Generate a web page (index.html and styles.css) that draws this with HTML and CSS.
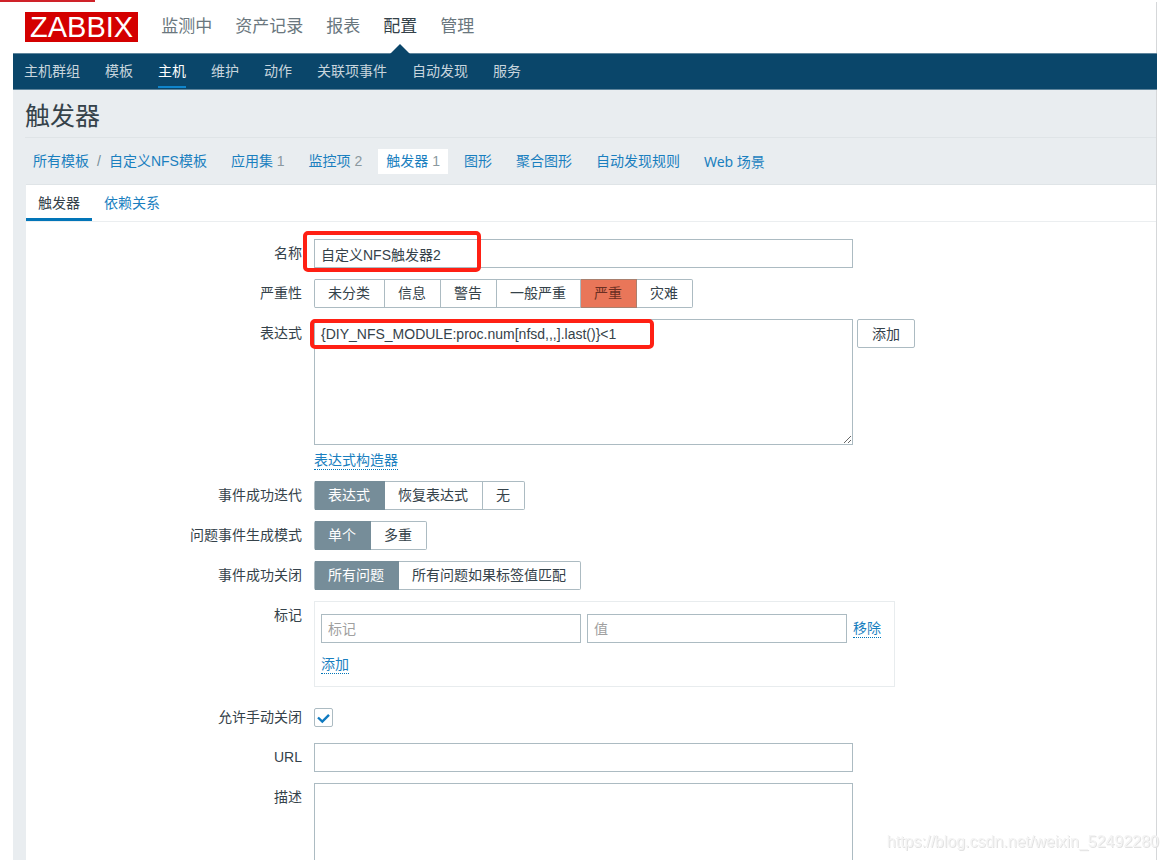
FILE: index.html
```html
<!DOCTYPE html>
<html lang="zh-CN">
<head>
<meta charset="utf-8">
<title>触发器</title>
<link rel="stylesheet" href="styles.css">
</head>
<body>
<div class="progress"></div>
<div class="page">
  <header class="header">
    <a class="logo" href="#">ZABBIX</a>
    <nav class="main-nav">
      <a href="#">监测中</a>
      <a href="#">资产记录</a>
      <a href="#">报表</a>
      <a href="#" class="selected">配置</a>
      <a href="#">管理</a>
    </nav>
  </header>
  <nav class="sub-nav">
    <a href="#">主机群组</a>
    <a href="#">模板</a>
    <a href="#" class="selected">主机</a>
    <a href="#">维护</a>
    <a href="#">动作</a>
    <a href="#">关联项事件</a>
    <a href="#">自动发现</a>
    <a href="#">服务</a>
  </nav>
  <main class="content">
    <h1 class="title">触发器</h1>
    <nav class="object-nav">
      <span class="crumbs"><a href="#">所有模板</a><span class="slash">/</span><a href="#">自定义NFS模板</a></span>
      <span class="item"><a href="#">应用集</a> <span class="count">1</span></span>
      <span class="item"><a href="#">监控项</a> <span class="count">2</span></span>
      <span class="item current"><a href="#">触发器</a> <span class="count">1</span></span>
      <span class="item"><a href="#">图形</a></span>
      <span class="item"><a href="#">聚合图形</a></span>
      <span class="item"><a href="#">自动发现规则</a></span>
      <span class="item humanist"><a href="#">Web 场景</a></span>
    </nav>
    <section class="panel">
      <nav class="tabs">
        <a href="#" class="active">触发器</a>
        <a href="#">依赖关系</a>
      </nav>
      <form class="form">
        <label class="label" for="name">名称</label>
        <div class="field marked marked-name">
          <input class="text wide" id="name" type="text" value="自定义NFS触发器2">
        </div>

        <span class="label" id="severity">严重性</span>
        <div class="field">
          <div class="segments" role="radiogroup" aria-labelledby="severity">
            <label><input type="radio" name="severity"><span>未分类</span></label>
            <label><input type="radio" name="severity"><span>信息</span></label>
            <label><input type="radio" name="severity"><span>警告</span></label>
            <label><input type="radio" name="severity"><span>一般严重</span></label>
            <label class="high"><input type="radio" name="severity" checked><span>严重</span></label>
            <label><input type="radio" name="severity"><span>灾难</span></label>
          </div>
        </div>

        <label class="label" for="expression">表达式</label>
        <div class="field">
          <div class="expression marked marked-expression">
            <textarea class="text area wide" id="expression" spellcheck="false">{DIY_NFS_MODULE:proc.num[nfsd,,,].last()}&lt;1</textarea>
            <button class="button" type="button">添加</button>
          </div>
          <div class="builder"><a class="action" href="#">表达式构造器</a></div>
        </div>

        <span class="label" id="recovery">事件成功迭代</span>
        <div class="field">
          <div class="segments" role="radiogroup" aria-labelledby="recovery">
            <label><input type="radio" name="recovery" checked><span>表达式</span></label>
            <label><input type="radio" name="recovery"><span>恢复表达式</span></label>
            <label><input type="radio" name="recovery"><span>无</span></label>
          </div>
        </div>

        <span class="label" id="mode">问题事件生成模式</span>
        <div class="field">
          <div class="segments" role="radiogroup" aria-labelledby="mode">
            <label><input type="radio" name="mode" checked><span>单个</span></label>
            <label><input type="radio" name="mode"><span>多重</span></label>
          </div>
        </div>

        <span class="label" id="closes">事件成功关闭</span>
        <div class="field">
          <div class="segments" role="radiogroup" aria-labelledby="closes">
            <label><input type="radio" name="closes" checked><span>所有问题</span></label>
            <label><input type="radio" name="closes"><span>所有问题如果标签值匹配</span></label>
          </div>
        </div>

        <span class="label">标记</span>
        <div class="field">
          <div class="tags">
            <div class="tag-row">
              <input class="text tag" type="text" placeholder="标记" aria-label="标记">
              <input class="text tag" type="text" placeholder="值" aria-label="值">
              <a class="action" href="#">移除</a>
            </div>
            <div><a class="action" href="#">添加</a></div>
          </div>
        </div>

        <label class="label" for="manual">允许手动关闭</label>
        <div class="field check-field">
          <input class="check" id="manual" type="checkbox" checked>
          <svg class="tick" viewBox="0 0 19 19" aria-hidden="true"><path d="M4 9.5 8.3 13.6 15 6.9" fill="none" stroke="#0f7ac0" stroke-width="2.4"/></svg>
        </div>

        <label class="label" for="url">URL</label>
        <div class="field"><input class="text wide" id="url" type="text"></div>

        <label class="label" for="description">描述</label>
        <div class="field"><textarea class="text area wide" id="description"></textarea></div>
      </form>
    </section>
  </main>
</div>
<div class="watermark">https://blog.csdn.net/weixin_52492280</div>
</body>
</html>
```
FILE: styles.css
```css
*,
*::before,
*::after {
  box-sizing: border-box;
}

body {
  margin: 0;
  background: #fff;
  color: #35424a;
  font: 14px/20px "Liberation Sans", "Noto Sans CJK SC", sans-serif;
}

a {
  color: #1a7fbf;
  text-decoration: none;
}

input,
textarea,
button {
  font: inherit;
  color: inherit;
}

.progress {
  width: 95px;
  height: 2px;
  background: #cf2229;
}

.page {
  margin: 0 11px 0 13px;
  border-right: 1px solid #d5d7d9;
}

/* Header */
.header {
  display: flex;
  gap: 23px;
  height: 51px;
  padding: 10px 12px 0;
}

.logo {
  height: 30px;
  padding: 0 5px;
  background: #d40000;
  color: #fff;
  font-size: 29px;
  line-height: 31px;
}

.main-nav {
  display: flex;
  gap: 23px;
  font-size: 17px;
  line-height: 30px;
}

.main-nav a {
  position: relative;
  color: #6a777e;
}

.main-nav .selected {
  color: #35424a;
}

.main-nav .selected::after {
  content: "";
  position: absolute;
  left: 50%;
  bottom: -1px;
  margin-left: -10px;
  border: 10px solid transparent;
  border-top: 0;
  border-bottom-color: #0a466a;
}

.sub-nav {
  display: flex;
  gap: 25px;
  height: 37px;
  margin-right: -1px;
  padding: 0 11px;
  background: #0a466a;
  border: solid #5f859c;
  border-width: 1px 0;
}

.sub-nav a {
  height: 34px;
  color: #c8d5dd;
  line-height: 34px;
}

.sub-nav .selected {
  color: #fff;
  border-bottom: 2px solid #0f85cc;
}

/* Page body */
.content {
  padding-left: 12px;
  background: #e9edf0;
}

.title {
  margin: 0;
  padding: 11px 0 6px;
  border-bottom: 1px solid #dfe4e7;
  font-size: 25px;
  font-weight: 400;
  line-height: 30px;
}

.object-nav {
  display: flex;
  gap: 8px;
  padding: 11px 0 10px;
  line-height: 25px;
}

.crumbs,
.item {
  padding: 0 8px;
}

.slash {
  padding: 0 8px;
  color: #768d99;
}

.count {
  color: #8a989f;
}

.current {
  background: #fff;
}

.humanist {
  font-family: "Noto Sans", "Noto Sans CJK SC", sans-serif;
}

.panel {
  margin-left: 1px;
  border-top: 1px solid #dfe4e7;
  background: #fff;
}

.tabs {
  display: flex;
  border-bottom: 1px solid #ebeef0;
}

.tabs a {
  height: 36px;
  padding: 0 12px;
  line-height: 36px;
}

.tabs .active {
  color: #35424a;
  border-bottom: 3px solid #0275b8;
}

/* Form */
.form {
  display: grid;
  grid-template-columns: 276px minmax(0, 1fr);
  gap: 11px 12px;
  padding: 17px 0 20px;
}

.label {
  line-height: 29px;
  text-align: right;
}

.field {
  min-width: 0;
}

.text {
  height: 29px;
  padding: 0 6px;
  border: 1px solid #acbbc2;
  border-radius: 0;
  background: #fff;
  outline: 0;
}

.wide {
  display: block;
  width: 100%;
  max-width: 539px;
}

.area {
  height: 126px;
  padding-top: 4px;
}

.expression {
  display: flex;
  align-items: flex-start;
  gap: 4px;
}

.button {
  height: 29px;
  flex: none;
  padding: 0 14px;
  border: 1px solid #acbbc2;
  border-radius: 2px;
  background: #fff;
}

.builder {
  padding-top: 5px;
}

.action {
  display: inline-block;
  line-height: 18px;
  border-bottom: 1px dotted #0275b8;
}

/* Red outlines drawn over the fields */
.marked {
  position: relative;
}

.marked::after {
  content: "";
  position: absolute;
  border: 4px solid #ff2014;
  border-radius: 5px;
  pointer-events: none;
}

.marked-name::after {
  left: -11px;
  top: -8px;
  width: 178px;
  height: 41px;
}

.marked-expression::after {
  left: -4px;
  top: 0;
  width: 344px;
  height: 30px;
}

.segments {
  display: inline-flex;
  height: 29px;
  vertical-align: top;
  border: solid #acbbc2;
  border-width: 0 0 0 1px;
  border-radius: 2px;
}

.segments label {
  position: relative;
}

.segments input {
  position: absolute;
  opacity: 0;
  margin: 0;
}

.segments span {
  display: block;
  padding: 0 14px 0 13px;
  border: solid #acbbc2;
  border-width: 1px 1px 1px 0;
  line-height: 27px;
}

.segments label:last-child span {
  border-radius: 0 2px 2px 0;
}

.segments input:checked + span {
  background: #768d99;
  border-color: #768d99;
  color: #fff;
}

.segments .high input:checked + span {
  background: #e97659;
  border-color: #a9806f;
  color: #6b2f23;
}

.tags {
  width: 581px;
  max-width: 100%;
  height: 86px;
  margin-bottom: 5px;
  padding: 12px 6px;
  border: 1px solid #e8ecee;
}

.tag-row {
  display: flex;
  align-items: center;
  gap: 6px;
  margin-bottom: 11px;
}

.tag {
  width: 260px;
  min-width: 0;
}

.tag::placeholder {
  color: #a0a0a0;
}

.check-field {
  display: grid;
  align-items: center;
  justify-items: start;
  height: 29px;
}

.check,
.tick {
  grid-area: 1 / 1;
  width: 19px;
  height: 19px;
}

.check {
  margin: 0;
  appearance: none;
  border: 1px solid #acbbc2;
  border-radius: 2px;
  background: #fff;
}

.tick {
  visibility: hidden;
  pointer-events: none;
}

.check:checked + .tick {
  visibility: visible;
}

.watermark {
  position: fixed;
  right: 9px;
  bottom: 8px;
  color: #f4f4f4;
  font-size: 16px;
  text-shadow: 1px 1px 0 #e2e2e2;
  pointer-events: none;
}
```
